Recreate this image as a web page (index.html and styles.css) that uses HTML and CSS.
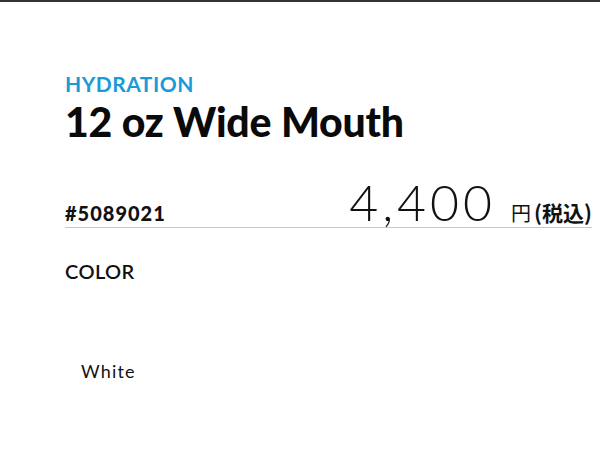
FILE: index.html
```html
<!DOCTYPE html>
<html lang="ja">
<head>
<meta charset="utf-8">
<link rel="stylesheet" href="styles.css">
</head>
<body>
<div class="topbar"></div>
<main class="product">
  <p class="category">HYDRATION</p>
  <h1 class="title">12 oz Wide Mouth</h1>
  <div class="price-row">
    <span class="sku">#5089021</span>
    <span class="price"><span class="amount">4,400</span><span class="yen">円</span><span class="tax">(税込)</span></span>
  </div>
  <h2 class="color-label">COLOR</h2>
  <div class="swatches">
    <span class="swatch-name">White</span>
  </div>
</main>
</body>
</html>
```
FILE: styles.css
```css
html, body {
  margin: 0;
  padding: 0;
  background: #fff;
}
body {
  font-family: "Lato", "Noto Sans CJK JP", sans-serif;
  color: #111;
}
.topbar {
  height: 2px;
  background: #333;
}
.product {
  padding: 70px 8px 0 65px;
}
.category {
  margin: 0;
  font-size: 21px;
  font-weight: 700;
  color: #1a9ad6;
  line-height: 24px;
  letter-spacing: 0.5px;
}
.title {
  margin: 4px 0 0;
  font-size: 41px;
  font-weight: 900;
  line-height: 44px;
  letter-spacing: -0.2px;
  color: #0a0a0a;
}
.price-row {
  margin-top: 33px;
  display: flex;
  justify-content: space-between;
  align-items: baseline;
  border-bottom: 1px solid #c8c8c8;
}
.sku {
  font-size: 20px;
  font-weight: 900;
  line-height: 22px;
  letter-spacing: 1px;
}
.price {
  display: flex;
  align-items: baseline;
}
.amount {
  font-size: 50px;
  font-weight: 300;
  line-height: 50px;
  letter-spacing: 4px;
}
.yen {
  margin-left: 15px;
  font-size: 20px;
  line-height: 22px;
  font-family: "Noto Sans CJK JP", sans-serif;
  font-weight: 400;
}
.tax {
  margin-left: 3px;
  font-size: 21px;
  line-height: 22px;
  font-family: "Noto Sans CJK JP", sans-serif;
  font-weight: 700;
}
.color-label {
  margin: 31px 0 0;
  font-size: 20px;
  font-weight: 600;
  line-height: 24px;
  letter-spacing: 0.4px;
}
.swatches {
  padding: 77px 0 0 16px;
}
.swatch-name {
  font-size: 18px;
  line-height: 22px;
  letter-spacing: 1.2px;
}
```
